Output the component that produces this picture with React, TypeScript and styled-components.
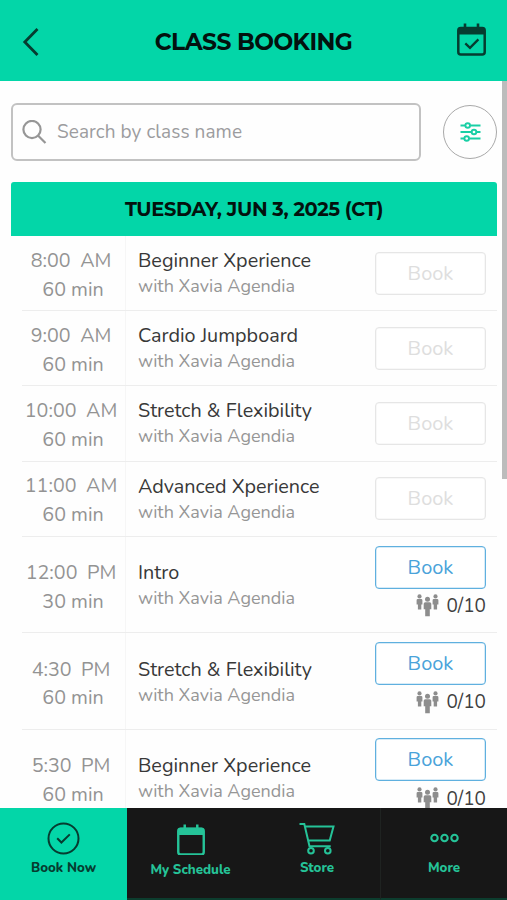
import React from 'react';
import styled, { createGlobalStyle, css } from 'styled-components';

const GREEN = '#03d6a8';
const ICON_DARK = '#063c30';
const NAV_BG = '#171717';
const NAV_FG = '#25c398';

const GlobalStyle = createGlobalStyle`
  * { box-sizing: border-box; }
  body {
    margin: 0;
    background: #fff;
    font-family: Nunito, Lato, "Open Sans", sans-serif;
  }
  button, input { font-family: inherit; }
`;

const Screen = styled.div`
  display: flex;
  flex-direction: column;
  width: 507px;
  height: 900px;
  overflow: hidden;
  background: #fefefe;
`;

const Header = styled.header`
  display: grid;
  grid-template-columns: 60px 1fr 60px;
  align-items: center;
  flex: none;
  height: 81px;
  padding-top: 2px;
  background: ${GREEN};
`;

const Title = styled.h1`
  margin: 0;
  font-family: Montserrat, Lato, sans-serif;
  font-size: 23.4px;
  line-height: 30px;
  font-weight: 700;
  letter-spacing: -0.55px;
  text-align: center;
  white-space: nowrap;
  color: #03120e;
`;

const IconButton = styled.button`
  display: flex;
  align-items: center;
  justify-content: center;
  height: 44px;
  padding: 0;
  border: 0;
  background: none;
  color: ${ICON_DARK};
`;

const BackButton = styled(IconButton)`
  padding-left: 1px;
`;

const CalendarButton = styled(IconButton)`
  padding-right: 11px;
  padding-bottom: 5px;
`;

const Content = styled.main`
  position: relative;
  flex: 1;
  min-height: 0;
  overflow: hidden;
  padding: 22px 11px 0;
`;

const ScrollThumb = styled.div`
  position: absolute;
  top: 0;
  right: 0;
  width: 5px;
  height: 398px;
  background: #bcbcbc;
`;

const SearchRow = styled.div`
  display: flex;
  align-items: center;
  justify-content: space-between;
  height: 58px;
`;

const SearchField = styled.label`
  display: flex;
  align-items: center;
  gap: 10px;
  width: 410px;
  height: 58px;
  padding: 0 9px;
  border: 2px solid #c2c2c2;
  border-radius: 6px;
`;

const SearchInput = styled.input`
  flex: 1;
  min-width: 0;
  padding: 0;
  border: 0;
  outline: 0;
  background: none;
  font-size: 19px;
  letter-spacing: 0.08px;
  color: #333;
  &::placeholder {
    color: #9c9c9e;
    opacity: 1;
  }
`;

const FilterButton = styled(IconButton)`
  width: 54px;
  height: 54px;
  margin: -1px -1px 0 0;
  border: 1.5px solid #a9a9a9;
  border-radius: 50%;
`;

const DateBanner = styled.h2`
  display: flex;
  align-items: center;
  justify-content: center;
  height: 54px;
  margin: 21px -1px 0 0;
  border-radius: 3px 3px 0 0;
  background: ${GREEN};
  font-family: Montserrat, Lato, sans-serif;
  font-size: 19.4px;
  font-weight: 700;
  letter-spacing: -0.33px;
  color: #03120e;
`;

const ClassList = styled.ul`
  margin: 0 -1px 0 11px;
  padding: 0;
  list-style: none;
`;

const ClassRow = styled.li<{ $open: boolean }>`
  display: grid;
  grid-template-columns: 104px 1fr 111px;
  height: ${(p) => (p.$open ? 96.4 : 75.2)}px;
  padding-right: 11px;
  border-bottom: 1px solid #ededed;
`;

const TimeColumn = styled.div<{ $open: boolean }>`
  display: flex;
  flex-direction: column;
  align-items: center;
  justify-content: center;
  padding: ${(p) => (p.$open ? 7 : 5)}px 1px 0 0;
  border-right: 1px solid #f6f6f6;
  font-size: 19.7px;
  line-height: 28.8px;
  color: #939393;
`;

const StartTime = styled.div`
  display: flex;
  gap: 9.5px;
  padding-right: 4px;
`;

const Details = styled.div<{ $open: boolean }>`
  display: flex;
  flex-direction: column;
  justify-content: center;
  padding: ${(p) => (p.$open ? 2.4 : 1)}px 0 0 12px;
  white-space: nowrap;
`;

const ClassName = styled.div`
  font-size: 19.8px;
  line-height: 26px;
  color: #383838;
`;

const Instructor = styled.div`
  font-size: 18px;
  line-height: 25px;
  color: #969696;
`;

const Action = styled.div`
  display: flex;
  flex-direction: column;
  align-items: flex-end;
  justify-content: center;
`;

const BookButton = styled.button`
  width: 111px;
  height: 43px;
  padding: 0;
  border: 1.6px solid #5fb0df;
  border-radius: 4px;
  background: #fff;
  font-size: 20px;
  color: #4aa3da;
  box-shadow: inset 0 0 0 0.5px #5fb0df80;
  ${(p) =>
    p.disabled &&
    css`
      border-color: #e6e6e6;
      box-shadow: inset 0 0 0 0.5px #e6e6e680;
      color: #dedede;
    `}
`;

const Capacity = styled.div`
  display: flex;
  align-items: center;
  gap: 7px;
  height: 34.5px;
  font-size: 19px;
  line-height: 18px;
  color: #3f3f3f;
`;

const TabBar = styled.nav`
  display: grid;
  grid-template-columns: 127px 127px 127px 126px;
  flex: none;
  height: 92px;
  background: ${NAV_BG};
`;

const Tab = styled.a<{ $active?: boolean; $divided?: boolean; $drop?: number }>`
  display: flex;
  flex-direction: column;
  align-items: center;
  padding-top: ${(p) => 12 + (p.$drop ?? 0)}px;
  border-bottom: 2px solid ${(p) => (p.$active ? GREEN : '#0c3d2e')};
  border-right: ${(p) => (p.$divided ? '1px solid #1f2321' : '0')};
  background: ${(p) => (p.$active ? GREEN : 'transparent')};
  color: ${(p) => (p.$active ? ICON_DARK : NAV_FG)};
`;

const TabIcon = styled.span`
  display: flex;
  align-items: center;
  justify-content: center;
  height: 36px;
`;

const TabLabel = styled.span`
  margin-top: 3px;
  font-size: 13.3px;
  line-height: 18px;
  font-weight: 800;
`;

const CalendarIcon = ({ size, checked }: { size: number; checked?: boolean }) => (
  <svg width={size} height={(size * 33) / 29} viewBox="0 0 29 33" fill="none">
    <rect x="1.3" y="5" width="26.4" height="26.6" rx="2.5" stroke="currentColor" strokeWidth="2.5" />
    <path d="M1 11.5V6.5Q1 4 3.5 4h22Q28 4 28 6.500v5z" fill="currentColor" />
    <path d="M8 .5v6M21 .5v6" stroke="currentColor" strokeWidth="2.600" />
    {checked && <path d="m8.300 20.300 4.700 4.500 8.400-8.400" stroke="currentColor" strokeWidth="2.300" />}
  </svg>
);

const PeopleIcon = () => (
  <svg width="23" height="23" viewBox="0 0 23 23" fill="#8d8d8d">
    <circle cx="3.5" cy="2.4" r="2.1" />
    <path d="M1.8 5h3.4Q6.4 5 6.4 6.3v4.3H5.3v5H1.9v-5H.6V6.3Q.6 5 1.8 5z" />
    <circle cx="19.5" cy="2.4" r="2.1" />
    <path d="M17.8 5h3.4q1.2 0 1.2 1.3v4.3h-1.3v5h-3.4v-5h-1.1V6.3Q16.6 5 17.8 5z" />
    <circle cx="11.5" cy="5.2" r="2.5" />
    <path d="M9.3 8.2h4.4q1.6 0 1.6 1.6v5.4h-1.500v7h-4.600v-7H7.700V9.800q0-1.600 1.600-1.600z" />
  </svg>
);

const SearchIcon = () => (
  <svg width="25" height="25" viewBox="0 0 25 25" fill="none" stroke="#969696" strokeWidth="2.2">
    <circle cx="10" cy="9.500" r="8.600" />
    <path d="m16.200 15.700 7.300 7.300" />
  </svg>
);

const FilterIcon = () => (
  <svg width="21" height="20" viewBox="0 0 21 20" fill="none" stroke="#19cfa5" strokeWidth="1.900">
    <path d="M.5 3.500h4.700M10.200 3.500h10.300M.5 10h11M16.500 10h4M.5 16.500h3.700M9.200 16.500h11.300" />
    <circle cx="7.700" cy="3.500" r="2.300" />
    <circle cx="14" cy="10" r="2.300" />
    <circle cx="6.700" cy="16.500" r="2.300" />
  </svg>
);

const CheckCircleIcon = () => (
  <svg width="33" height="33" viewBox="0 0 33 33" fill="none" stroke="currentColor" strokeWidth="2">
    <circle cx="16.500" cy="16.500" r="15" />
    <path d="m10.200 16.300 4.200 4.200 8.400-8.100" />
  </svg>
);

const CartIcon = () => (
  <svg width="36" height="33" viewBox="0 0 36 33" fill="none" stroke="currentColor" strokeWidth="2">
    <path d="M.5 2h4.800l5.200 22.200h21.200M6.300 4.500h28.200l-3.800 14H9.300" />
    <circle cx="12" cy="28.800" r="2.800" />
    <circle cx="28.800" cy="28.800" r="2.800" />
  </svg>
);

const DotsIcon = () => (
  <svg width="29" height="10" viewBox="0 0 29 10" fill="none" stroke="currentColor" strokeWidth="2.100">
    <circle cx="4.500" cy="5" r="3.200" />
    <circle cx="14.500" cy="5" r="3.200" />
    <circle cx="24.500" cy="5" r="3.200" />
  </svg>
);

interface ClassItem {
  time: string;
  period: string;
  minutes: number;
  name: string;
  capacity?: string;
}

const classes: ClassItem[] = [
  { time: '8:00', period: 'AM', minutes: 60, name: 'Beginner Xperience' },
  { time: '9:00', period: 'AM', minutes: 60, name: 'Cardio Jumpboard' },
  { time: '10:00', period: 'AM', minutes: 60, name: 'Stretch & Flexibility' },
  { time: '11:00', period: 'AM', minutes: 60, name: 'Advanced Xperience' },
  { time: '12:00', period: 'PM', minutes: 30, name: 'Intro', capacity: '0/10' },
  { time: '4:30', period: 'PM', minutes: 60, name: 'Stretch & Flexibility', capacity: '0/10' },
  { time: '5:30', period: 'PM', minutes: 60, name: 'Beginner Xperience', capacity: '0/10' },
];

export default function App() {
  return (
    <Screen>
      <GlobalStyle />
      <Header>
        <BackButton aria-label="Back">
          <svg width="18" height="30" viewBox="0 0 18 30" fill="none" stroke="currentColor" strokeWidth="2.800">
            <path d="M15.500 2 2.800 15l12.700 13" />
          </svg>
        </BackButton>
        <Title>CLASS BOOKING</Title>
        <CalendarButton aria-label="Calendar">
          <CalendarIcon size={29} checked />
        </CalendarButton>
      </Header>

      <Content>
        <SearchRow>
          <SearchField>
            <SearchIcon />
            <SearchInput placeholder="Search by class name" />
          </SearchField>
          <FilterButton aria-label="Filters">
            <FilterIcon />
          </FilterButton>
        </SearchRow>

        <DateBanner>TUESDAY, JUN 3, 2025 (CT)</DateBanner>

        <ClassList>
          {classes.map((c) => {
            const open = !!c.capacity;
            return (
              <ClassRow key={c.time} $open={open}>
                <TimeColumn $open={open}>
                  <StartTime>
                    <span>{c.time}</span>
                    <span>{c.period}</span>
                  </StartTime>
                  <div>{c.minutes} min</div>
                </TimeColumn>
                <Details $open={open}>
                  <ClassName>{c.name}</ClassName>
                  <Instructor>with Xavia Agendia</Instructor>
                </Details>
                <Action>
                  <BookButton disabled={!open}>Book</BookButton>
                  {open && (
                    <Capacity>
                      <PeopleIcon />
                      <span>{c.capacity}</span>
                    </Capacity>
                  )}
                </Action>
              </ClassRow>
            );
          })}
        </ClassList>
        <ScrollThumb />
      </Content>

      <TabBar>
        <Tab $active>
          <TabIcon><CheckCircleIcon /></TabIcon>
          <TabLabel>Book Now</TabLabel>
        </Tab>
        <Tab $drop={1.5}>
          <TabIcon><CalendarIcon size={28} /></TabIcon>
          <TabLabel>My Schedule</TabLabel>
        </Tab>
        <Tab $divided>
          <TabIcon><CartIcon /></TabIcon>
          <TabLabel>Store</TabLabel>
        </Tab>
        <Tab>
          <TabIcon><DotsIcon /></TabIcon>
          <TabLabel>More</TabLabel>
        </Tab>
      </TabBar>
    </Screen>
  );
}
